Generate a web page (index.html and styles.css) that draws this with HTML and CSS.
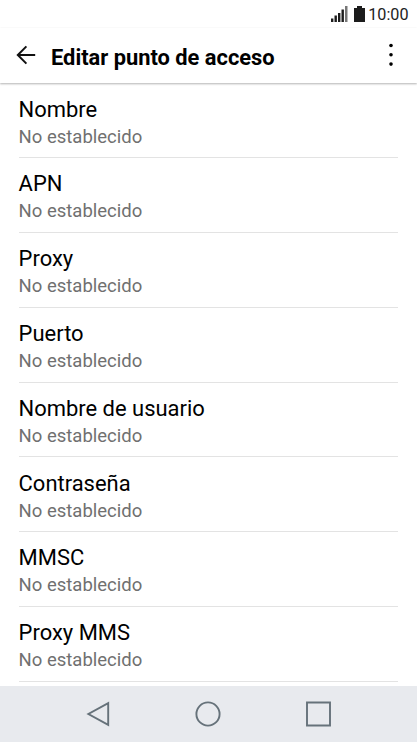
FILE: index.html
```html
<!DOCTYPE html>
<html lang="es">
<head>
<meta charset="utf-8">
<title>Editar punto de acceso</title>
<link rel="stylesheet" href="styles.css">
</head>
<body>
<div class="status">
<svg class="signal" width="17" height="16" viewBox="0 0 17 16"><path d="M0 12.5h2.4V16H0zM3.5 9.5h2.4V16H3.5zM7 7h2.4v9H7zM10.5 3.5h2.4V16h-2.4z"/><path class="last" d="M14 0h2.5v16H14z"/></svg>
<svg class="battery" width="11" height="16" viewBox="0 0 11 16"><path d="M3 0h5v2h3v14H0V2h3z"/></svg>
<span>10:00</span>
</div>
<header class="bar">
<svg class="back" width="20" height="20" viewBox="0 0 20 20"><path d="M19.2 10H2M10.4 1.4L1.8 10l8.6 8.6"/></svg>
<h1>Editar punto de acceso</h1>
<svg class="more" width="4" height="24" viewBox="0 0 4 24"><circle cx="2" cy="2.5" r="1.8"/><circle cx="2" cy="11.8" r="1.8"/><circle cx="2" cy="21.1" r="1.8"/></svg>
</header>
<ul class="list">
<li><b>Nombre</b><span>No establecido</span></li>
<li><b>APN</b><span>No establecido</span></li>
<li><b>Proxy</b><span>No establecido</span></li>
<li><b>Puerto</b><span>No establecido</span></li>
<li><b>Nombre de usuario</b><span>No establecido</span></li>
<li><b>Contraseña</b><span>No establecido</span></li>
<li><b>MMSC</b><span>No establecido</span></li>
<li><b>Proxy MMS</b><span>No establecido</span></li>
</ul>
<nav class="nav">
<svg width="26" height="28" viewBox="0 0 26 28"><path d="M23.2 3.2v21.6L3.4 14z"/></svg>
<svg width="26" height="28" viewBox="0 0 26 28"><circle cx="13" cy="14" r="11.6"/></svg>
<svg width="26" height="28" viewBox="0 0 26 28"><path d="M2 2.5h23v23H2z"/></svg>
</nav>
</body>
</html>
```
FILE: styles.css
```css
* { box-sizing: border-box; }
body { margin: 0; width: 417px; height: 742px; overflow: hidden; display: flex; flex-direction: column; background: #fff; color: #000; font-family: Roboto, sans-serif; }
.status { height: 28px; flex: none; display: flex; justify-content: flex-end; align-items: center; padding-right: 8.5px; font-size: 16.2px; color: #222; }
.status span { margin-top: 1px; }
.status svg { fill: #1c1c1c; }
.status .last { fill: #777; }
.signal { margin-right: 6.5px; }
.battery { margin-right: 3px; }
.bar { height: 55px; flex: none; display: flex; align-items: center; padding: 0 24px 0 15.5px; box-shadow: 0 1px 2px rgba(0,0,0,.3); }
.bar h1 { margin: 4px 0 0 15.5px; flex: 1; font-size: 21.85px; line-height: 28px; font-weight: 700; }
.back { fill: none; stroke: #111; stroke-width: 2; margin-bottom: 1px; }
.more { margin-bottom: 1px; }
.list { list-style: none; margin: 0; padding: .5px 18.6px 0; flex: 1; min-height: 0; }
.list li { height: 74.8px; padding-top: 12.2px; border-bottom: 1px solid #e3e3e3; }
.list b { display: block; font-weight: 400; font-size: 21.95px; line-height: 28px; }
.list span { display: block; font-size: 18.5px; line-height: 26px; color: #707070; }
.nav { height: 56px; flex: none; display: flex; justify-content: space-between; align-items: center; padding: 0 86px 0 85px; background: #e8eaee; }
.nav svg { fill: none; stroke: #66727a; stroke-width: 1.9; }
```
